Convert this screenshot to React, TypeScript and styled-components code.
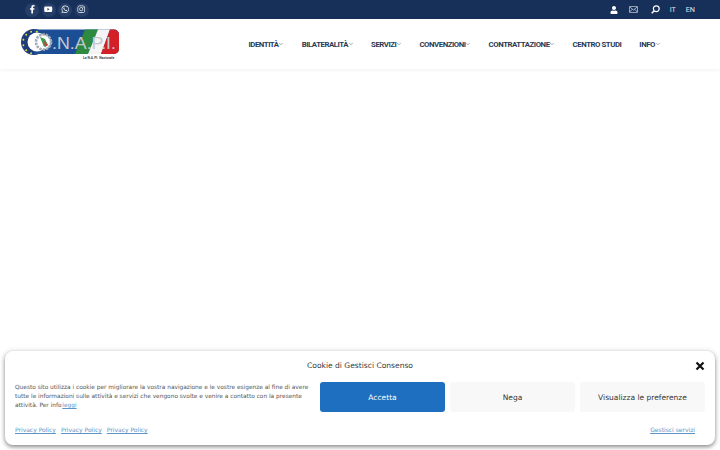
import React from "react";
import styled, { createGlobalStyle } from "styled-components";
import { FaFacebookF, FaYoutube, FaWhatsapp, FaInstagram, FaUser } from "react-icons/fa";
import { ChevronDown } from "lucide-react";

const Global = createGlobalStyle`
  html, body { margin: 0; padding: 0; background: #fff; }
  body { font-family: "Roboto", sans-serif; height: 450px; overflow: hidden; }
  a { text-decoration: none; color: inherit; }
`;

const Page = styled.div`
  position: relative;
  width: 720px;
  height: 450px;
  overflow: hidden;
`;

const TopBar = styled.div`
  height: 19px;
  background: #17305a;
  display: flex;
  align-items: center;
  justify-content: space-between;
  padding: 0 25px;
`;

const Socials = styled.div`
  display: flex;
  gap: 2.5px;
`;

const Social = styled.a`
  width: 14px;
  height: 14px;
  border-radius: 50%;
  background: #263f68;
  color: #fff;
  display: flex;
  align-items: center;
  justify-content: center;
  font-size: 8.5px;
`;

const TopRight = styled.div`
  display: flex;
  align-items: center;
  color: #fff;
`;

const TopIcon = styled.span<{ $gap: number }>`
  display: flex;
  margin-right: ${(p) => p.$gap}px;
`;

const Lang = styled.a<{ $gap?: number }>`
  font-family: "Roboto", sans-serif;
  font-size: 7.2px;
  color: #dfe5ee;
  margin-right: ${(p) => p.$gap ?? 0}px;
`;

const Header = styled.header`
  height: 50px;
  display: flex;
  align-items: center;
  justify-content: space-between;
  padding: 0 60px 0 20px;
  background: #fff;
  box-shadow: 0 1px 4px rgba(0, 0, 0, 0.06);
`;

const LogoMark = styled.svg`
  display: block;
  width: 100px;
  height: 31px;
  margin-top: 1px;
`;

const Nav = styled.nav`
  display: flex;
  align-items: center;
  gap: 18px;
`;

const NavItem = styled.a`
  display: flex;
  align-items: center;
  font-family: "Roboto", sans-serif;
  font-weight: 700;
  font-size: 7.8px;
  letter-spacing: -0.45px;
  color: #2a3a55;
  white-space: nowrap;
`;

const Caret = styled(ChevronDown)`
  width: 6px;
  height: 6px;
  margin: 0 -0.5px;
  color: #4c586b;
`;

const Modal = styled.div`
  position: absolute;
  left: 5px;
  top: 351px;
  width: 710px;
  height: 94px;
  box-sizing: border-box;
  background: #fff;
  border-radius: 8px;
  box-shadow: 0 2px 4px rgba(0, 0, 0, 0.42), 0 0 6px rgba(0, 0, 0, 0.1);
  padding: 0 10px;
  display: flex;
  flex-direction: column;
`;

const ModalHead = styled.div`
  height: 30px;
  padding-bottom: 2px;
  display: flex;
  align-items: center;
  justify-content: center;
  position: relative;
`;

const Title = styled.div`
  font-family: "DejaVu Sans", sans-serif;
  font-size: 7.55px;
  color: #333;
`;

const Close = styled.svg`
  position: absolute;
  right: 0;
  top: 10px;
  width: 10px;
  height: 10px;
`;

const ModalBody = styled.div`
  display: flex;
  align-items: center;
  justify-content: space-between;
  height: 30px;
`;

const Message = styled.p`
  margin: 0 0 1px;
  width: 298px;
  font-family: "DejaVu Sans", sans-serif;
  font-size: 5.85px;
  line-height: 9px;
  color: #555;
`;

const Read = styled.a`
  display: inline-block;
  color: #5b93c7;
  text-decoration: underline;
  margin-left: 0.7px;
`;

const Buttons = styled.div`
  display: flex;
  gap: 5px;
`;

const Button = styled.button<{ $primary?: boolean }>`
  width: 125px;
  height: 30px;
  border: 0;
  padding: 0;
  border-radius: 3px;
  font-family: "DejaVu Sans", sans-serif;
  font-size: 7.5px;
  color: ${(p) => (p.$primary ? "#fff" : "#333")};
  background: ${(p) => (p.$primary ? "#1e6fc0" : "#f8f8f8")};
`;

const ModalFoot = styled.div`
  display: flex;
  align-items: center;
  justify-content: space-between;
  padding: 0 10px 0 0;
  height: 32px;
  margin-top: 2px;
`;

const FootLinks = styled.div`
  display: flex;
  gap: 5px;
`;

const FootLink = styled.a`
  font-family: "DejaVu Sans", sans-serif;
  font-size: 6px;
  color: #5b93c7;
  text-decoration: underline;
`;

const navItems: [string, boolean][] = [
  ["IDENTITÀ", true],
  ["BILATERALITÀ", true],
  ["SERVIZI", true],
  ["CONVENZIONI", true],
  ["CONTRATTAZIONE", true],
  ["CENTRO STUDI", false],
  ["INFO", true],
];

const stars = Array.from({ length: 10 }, (_, i) => {
  const a = ((i * 30 + 105) * Math.PI) / 180;
  return [14 + 11 * Math.cos(a), 13.5 + 11 * Math.sin(a)];
});

const Logo = () => (
  <LogoMark viewBox="0 0 100 31">
    <circle cx="14" cy="13" r="13" fill="#1d3c7c" />
    <path d="M14 0.5 H94 a5 5 0 0 1 5 5 V20 a5 5 0 0 1 -5 5 H14 Z" fill="#1c4e96" />
    <circle cx="17" cy="13" r="9.5" fill="#fff" />
    <polygon points="65,0.5 78,0.5 68,25 55,25" fill="#2d8a3e" />
    <polygon points="78,0.5 90,0.5 81,25 68,25" fill="#f4f4f4" />
    <path d="M90 .5 H94 a5 5 0 0 1 5 5 V20 a5 5 0 0 1 -5 5 H81 Z" fill="#d32027" />
    {stars.map(([x, y], i) => (
      <circle key={i} cx={x} cy={y} r="1" fill="#e6d92e" />
    ))}
    <circle cx="23.5" cy="13" r="7.5" fill="#fff" stroke="#a3abb5" strokeWidth="2.6" strokeDasharray="2.4 1" />
    <path d="M20 8 L25 10 L28 16 L24 18 L22 13 Z" fill="#3d9a52" />
    <path d="M24 12 L28 16 L25 18 Z" fill="#d6383a" />
    <text
      x="32"
      y="19.5"
      fontFamily="Liberation Sans, sans-serif"
      fontSize="17"
      fill="#c4c9d0"
      textLength="64"
      lengthAdjust="spacingAndGlyphs"
    >
      .N.A.P.I.
    </text>
    <text x="63" y="29.5" fontFamily="Roboto, sans-serif" fontSize="3.4" fontWeight="700" fill="#444">
      La N.A.PI. Nazionale
    </text>
  </LogoMark>
);

export default function App() {
  return (
    <Page>
      <Global />
      <TopBar>
        <Socials>
          <Social><FaFacebookF /></Social>
          <Social><FaYoutube /></Social>
          <Social><FaWhatsapp /></Social>
          <Social><FaInstagram /></Social>
        </Socials>
        <TopRight>
          <TopIcon $gap={11}><FaUser size={8} /></TopIcon>
          <TopIcon $gap={13}>
            <svg width="9" height="7" viewBox="0 0 9 7" fill="none" stroke="#dfe5ee" strokeWidth="0.7">
              <rect x="0.4" y="0.4" width="8.2" height="6.2" rx="0.8" />
              <path d="M0.6 0.8 L4.5 4 L8.4 0.8 M0.6 6.2 L3.3 3.2 M8.4 6.2 L5.7 3.2" />
            </svg>
          </TopIcon>
          <TopIcon $gap={10}>
            <svg width="9" height="9" viewBox="0 0 9 9" fill="none" stroke="#fff" strokeWidth="1.2">
              <circle cx="5.3" cy="3.7" r="2.9" />
              <path d="M3.2 5.8 L0.7 8.3" strokeWidth="1.5" />
            </svg>
          </TopIcon>
          <Lang $gap={10}>IT</Lang>
          <Lang>EN</Lang>
        </TopRight>
      </TopBar>
      <Header>
        <Logo />
        <Nav>
          {navItems.map(([label, caret]) => (
            <NavItem key={label}>
              {label}
              {caret && <Caret strokeWidth={2} />}
            </NavItem>
          ))}
        </Nav>
      </Header>
      <Modal>
        <ModalHead>
          <Title>Cookie di Gestisci Consenso</Title>
          <Close viewBox="0 0 10 10">
            <path d="M1.5 1.5 L8.5 8.5 M8.5 1.5 L1.5 8.5" stroke="#111" strokeWidth="2.2" />
          </Close>
        </ModalHead>
        <ModalBody>
          <Message>
            Questo sito utilizza i cookie per migliorare la vostra navigazione e le vostre esigenze al fine di avere
            tutte le informazioni sulle attività e servizi che vengono svolte e venire a contatto con la presente
            attività. Per info<Read>leggi</Read>
          </Message>
          <Buttons>
            <Button $primary>Accetta</Button>
            <Button>Nega</Button>
            <Button>Visualizza le preferenze</Button>
          </Buttons>
        </ModalBody>
        <ModalFoot>
          <FootLinks>
            <FootLink>Privacy Policy</FootLink>
            <FootLink>Privacy Policy</FootLink>
            <FootLink>Privacy Policy</FootLink>
          </FootLinks>
          <FootLink>Gestisci servizi</FootLink>
        </ModalFoot>
      </Modal>
    </Page>
  );
}
